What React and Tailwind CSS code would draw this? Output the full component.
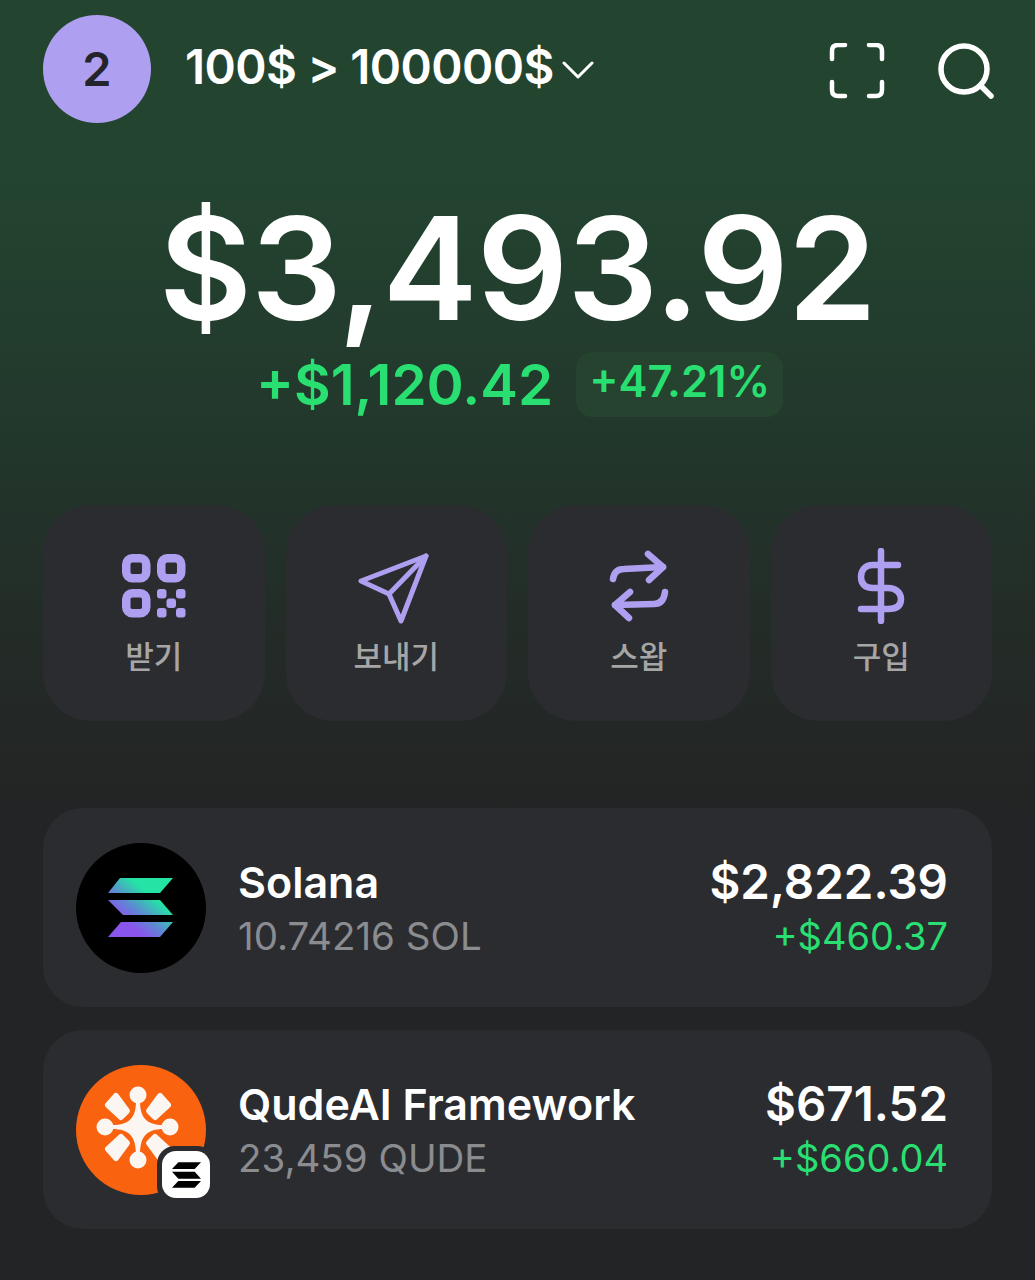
const actions = [
  { label: '받기', icon: QrIcon },
  { label: '보내기', icon: SendIcon },
  { label: '스왑', icon: SwapIcon },
  { label: '구입', icon: DollarIcon },
]

function QrIcon() {
  return (
    <svg width="64" height="64" viewBox="0 0 64 64" fill="none" stroke="#ae9ff0" strokeWidth="8.5">
      <rect x="4.25" y="4.25" width="20" height="20" rx="6" />
      <rect x="39.25" y="4.25" width="20" height="20" rx="6" />
      <rect x="4.25" y="39.25" width="20" height="20" rx="6" />
      <g fill="#ae9ff0" stroke="none">
        <rect x="35" y="35" width="9.5" height="9.5" rx="3" />
        <rect x="54" y="35" width="9.5" height="9.5" rx="3" />
        <rect x="44.5" y="44.5" width="9.5" height="9.5" rx="3" />
        <rect x="35" y="54" width="9.5" height="9.5" rx="3" />
        <rect x="54" y="54" width="9.5" height="9.5" rx="3" />
      </g>
    </svg>
  )
}

function SendIcon() {
  return (
    <svg width="72" height="72" viewBox="2 -3 72 72" className="overflow-visible" fill="none" stroke="#ae9ff0" strokeWidth="5" strokeLinejoin="round" strokeLinecap="round">
      <path d="M68 3 L3 28 L31 41 L43 68 Z" />
      <path d="M68 3 L31 41" />
    </svg>
  )
}

function SwapIcon() {
  return (
    <svg width="60" height="72" viewBox="0 0 60 72" fill="none" stroke="#ae9ff0" strokeWidth="6.5" strokeLinejoin="round" strokeLinecap="round">
      <path d="M4 29 C5 22 9 19 15 19 L54 17" />
      <path d="M39 4 L54 17 L40 30" />
      <path d="M56 42 C55 50 51 54 45 54 L6 55" />
      <path d="M21 42 L6 55 L20 68" />
    </svg>
  )
}

function DollarIcon() {
  return (
    <svg width="48" height="76" viewBox="0 0 48 76" fill="none" stroke="#ae9ff0" strokeWidth="6.5" strokeLinecap="round" strokeLinejoin="round">
      <path d="M24 3 V73" />
      <path d="M41 17 H16 C8 17 4 22 4 29 C4 36 8 40 16 40 H31 C39 40 44 45 44 51 C44 58 39 61 31 61 H4" />
    </svg>
  )
}

function ScanIcon() {
  return (
    <svg width="56" height="56" viewBox="0 0 56 56" fill="none" stroke="white" strokeWidth="4.5" strokeLinecap="round" strokeLinejoin="round">
      <path d="M3 16 V8 C3 4 5 2 9 2 H16" />
      <path d="M40 2 H47 C51 2 53 4 53 8 V16" />
      <path d="M3 39 V47 C3 51 5 53 9 53 H16" />
      <path d="M40 53 H47 C51 53 53 51 53 47 V39" />
    </svg>
  )
}

function SearchIcon() {
  return (
    <svg width="56" height="56" viewBox="0 0 56 56" fill="none" stroke="white" strokeWidth="5.5" strokeLinecap="round">
      <circle cx="26" cy="26" r="23" />
      <path d="M43 43 L53 53" />
    </svg>
  )
}

function Chevron() {
  return (
    <svg width="32" height="20" viewBox="0 0 32 20" fill="none" stroke="white" strokeWidth="3" strokeLinecap="round" strokeLinejoin="round">
      <path d="M2 3 L16 17 L30 3" />
    </svg>
  )
}

function SolanaLogo() {
  return (
    <svg width="130" height="130" viewBox="0 0 130 130" className="shrink-0">
      <defs>
        <linearGradient id="solGrad" x1="32" y1="94" x2="80" y2="35" gradientUnits="userSpaceOnUse">
          <stop offset="0.3" stopColor="#8a55ec" />
          <stop offset="0.5" stopColor="#5f86d4" />
          <stop offset="0.78" stopColor="#25e2a5" />
        </linearGradient>
      </defs>
      <circle cx="65" cy="65" r="65" fill="#000" />
      <path d="M44 35 H97 L84 50 H32 Z" fill="url(#solGrad)" />
      <path d="M32 57 H84 L97 72 H47 Z" fill="url(#solGrad)" />
      <path d="M45 79 H97 L84 94 H32 Z" fill="url(#solGrad)" />
    </svg>
  )
}

function QudeLogo() {
  return (
    <div className="relative shrink-0 w-[130px] h-[130px]">
      <svg width="130" height="130" viewBox="0 0 130 130">
        <circle cx="65" cy="65" r="65" fill="#f9620f" />
        <g fill="#fbf6f1">
          <circle cx="62" cy="30" r="8.5" />
          <circle cx="62" cy="95" r="8.5" />
          <circle cx="29" cy="62" r="8.5" />
          <circle cx="94" cy="62" r="8.5" />
          <path d="M60 36 C60 52 54 60 36 60 L36 64 C54 64 60 72 60 90 L64 90 C64 72 70 64 88 64 L88 60 C70 60 64 52 64 36 Z" />
        </g>
        <g fill="#fbf6f1" stroke="#fbf6f1" strokeWidth="6" strokeLinejoin="round">
          <path d="M32 40 L40 31 L51 46 L45 52 Z" />
          <path d="M92 40 L84 31 L73 46 L79 52 Z" />
          <path d="M32 84 L40 93 L51 78 L45 72 Z" />
          <path d="M92 84 L84 93 L73 78 L79 72 Z" />
        </g>
      </svg>
      <div className="absolute right-[-9px] bottom-[-9px] w-[58px] h-[58px] rounded-[18px] bg-[#2b2c30] flex items-center justify-center">
        <div className="w-[48px] h-[47px] rounded-[14px] bg-white flex items-center justify-center">
          <svg width="29" height="26" viewBox="0 0 32 28" fill="#000">
            <path d="M7 0 H32 L25 7.5 H0 Z" />
            <path d="M0 10.5 H25 L32 18 H7 Z" />
            <path d="M7 20.5 H32 L25 28 H0 Z" />
          </svg>
        </div>
      </div>
    </div>
  )
}

const tokens = [
  { name: 'Solana', amount: '10.74216 SOL', value: '$2,822.39', change: '+$460.37', logo: SolanaLogo },
  { name: 'QudeAI Framework', amount: '23,459 QUDE', value: '$671.52', change: '+$660.04', logo: QudeLogo },
]

export default function App() {
  return (
    <div
      className="w-[1035px] h-[1280px] overflow-hidden px-[43px] pt-[15px] bg-[linear-gradient(180deg,#234530_0%,#234530_12%,#22382c_33%,#232b27_50%,#232425_64%,#232425_100%)] text-white"
      style={{ fontFamily: 'Inter, "Noto Sans CJK KR", sans-serif' }}
    >
      {/* Top bar */}
      <header className="flex items-center h-[108px]">
        <div className="w-[108px] h-[108px] rounded-full bg-[#ae9ff0] flex items-center justify-center text-[#23252b] text-[47px] font-semibold">
          2
        </div>
        <div className="ml-[34px] text-[47.5px] font-semibold tracking-[-0.6px] leading-none pb-[4px] whitespace-nowrap">100$ &gt; 100000$</div>
        <div className="ml-[8px] mt-[2px]">
          <Chevron />
        </div>
        <div className="ml-auto flex items-center gap-[53px] pt-[3px] mr-[-2px]">
          <ScanIcon />
          <SearchIcon />
        </div>
      </header>

      {/* Balance */}
      <div className="mt-[61px] flex justify-center">
        <div className="text-[143px] leading-[168px] font-semibold tracking-[-1px] whitespace-nowrap">$3,493.92</div>
      </div>
      <div className="ml-[4px] flex items-center justify-center gap-[23px] text-[#29df72]">
        <span className="text-[56.5px] leading-[64px] font-semibold">+$1,120.42</span>
        <span className="h-[65px] px-[13px] pb-[6px] rounded-[16px] bg-[#25432f] flex items-center text-[43.5px] font-semibold">+47.21%</span>
      </div>

      {/* Actions */}
      <div className="mt-[88px] grid grid-cols-4 gap-[21px]">
        {actions.map((a) => (
          <div key={a.label} className="h-[216px] rounded-[48px] bg-[#2b2c30] flex flex-col items-center">
            <div className="h-[133px] pt-[29px] flex items-center justify-center">
              <a.icon />
            </div>
            <span className="text-[31px] leading-[38px] font-medium text-[#a6a6a6]">{a.label}</span>
          </div>
        ))}
      </div>

      {/* Token list */}
      <div className="mt-[87px] flex flex-col gap-[23px]">
        {tokens.map((t) => (
          <div key={t.name} className="h-[199px] rounded-[40px] bg-[#2b2c30] flex items-center pl-[33px] pr-[44px]">
            <t.logo />
            <div className="ml-[32px] pt-[2px] flex flex-col">
              <span className="text-[43px] leading-[54px] font-semibold">{t.name}</span>
              <span className="text-[38.5px] leading-[54px] text-[#8b8c90]">{t.amount}</span>
            </div>
            <div className="ml-auto pt-[2px] flex flex-col items-end">
              <span className="text-[47.5px] leading-[54px] font-semibold">{t.value}</span>
              <span className="text-[38px] leading-[54px] text-[#29df72]">{t.change}</span>
            </div>
          </div>
        ))}
      </div>
    </div>
  )
}
